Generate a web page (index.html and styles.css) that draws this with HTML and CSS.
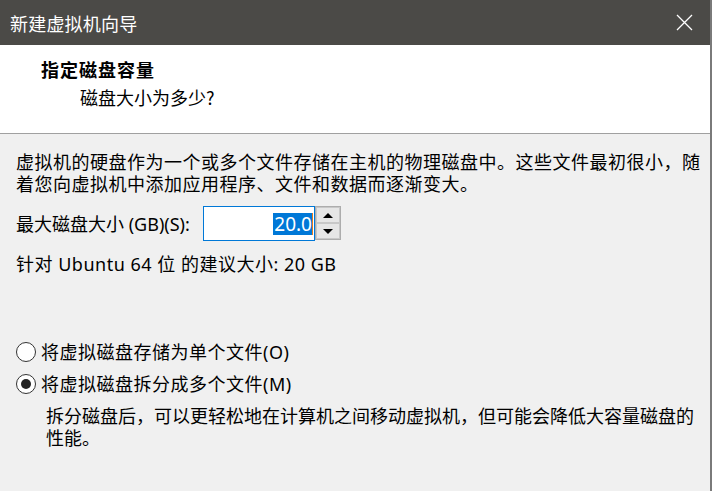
FILE: index.html
```html
<!DOCTYPE html>
<html lang="zh-CN">
<head>
<meta charset="utf-8">
<title>新建虚拟机向导</title>
<link rel="stylesheet" href="styles.css">
</head>
<body>
<div class="window">
  <div class="titlebar">
    <span class="title">新建虚拟机向导</span>
    <svg class="close" width="17" height="17" viewBox="0 0 17 17"><path d="M1 1 L16 16 M16 1 L1 16" stroke="#ffffff" stroke-width="1.3" fill="none"/></svg>
  </div>
  <div class="header">
    <div class="h-title">指定磁盘容量</div>
    <div class="h-sub">磁盘大小为多少?</div>
  </div>
  <div class="content">
    <p class="para">虚拟机的硬盘作为一个或多个文件存储在主机的物理磁盘中。这些文件最初很小，随着您向虚拟机中添加应用程序、文件和数据而逐渐变大。</p>
    <div class="size-row">
      <span class="label">最大磁盘大小 (GB)(S):</span>
      <div class="spin">
        <div class="spin-input"><span class="sel">20.0</span><span class="caret"></span></div>
        <div class="spin-btns">
          <div class="spin-btn"><span class="tri up"></span></div>
          <div class="spin-btn"><span class="tri down"></span></div>
        </div>
      </div>
    </div>
    <p class="recommend">针对 Ubuntu 64 位 的建议大小: 20 GB</p>
    <div class="radios">
      <div class="radio-row"><span class="radio"></span><span>将虚拟磁盘存储为单个文件(O)</span></div>
      <div class="radio-row"><span class="radio checked"></span><span>将虚拟磁盘拆分成多个文件(M)</span></div>
      <p class="desc">拆分磁盘后，可以更轻松地在计算机之间移动虚拟机，但可能会降低大容量磁盘的性能。</p>
    </div>
  </div>
</div>
</body>
</html>
```
FILE: styles.css
```css
html, body {
  margin: 0;
  padding: 0;
  background: #ffffff;
}
body {
  width: 713px;
  height: 491px;
  overflow: hidden;
  font-family: "Noto Sans", "Noto Sans CJK SC", sans-serif;
  color: #000;
}
.window {
  width: 710px;
  height: 491px;
  border-right: 2px solid #7a7a7a;
  background: #f0f0f0;
  display: flex;
  flex-direction: column;
}
.titlebar {
  height: 45px;
  background: #4b4a47;
  color: #fff;
  display: flex;
  align-items: center;
  justify-content: space-between;
  padding: 0 17px 0 10px;
  flex: none;
}
.title {
  font-family: "Noto Sans CJK SC", sans-serif;
  font-size: 18px;
  letter-spacing: 0.2px;
}
.close {
  display: block;
}
.header {
  height: 89px;
  background: #fff;
  border-bottom: 1px solid #a0a0a0;
  box-sizing: border-box;
  padding: 13px 0 0 41px;
  flex: none;
  font-family: "Noto Sans CJK SC", sans-serif;
}
.h-title {
  font-size: 18px;
  font-weight: 700;
  line-height: 22px;
  letter-spacing: 1px;
}
.h-sub {
  font-size: 18px;
  line-height: 22px;
  margin: 6px 0 0 39px;
}
.content {
  padding: 17px 0 0 16px;
  font-size: 18px;
  line-height: 22px;
  letter-spacing: 0.5px;
}
.para {
  margin: 0;
  width: 700px;
}
.size-row {
  display: flex;
  align-items: center;
  margin-top: 11px;
  height: 35px;
}
.label {
  width: 187px;
  letter-spacing: 0;
}
.spin {
  display: flex;
  height: 35px;
}
.spin-input {
  width: 112px;
  height: 35px;
  box-sizing: border-box;
  border: 1px solid #0078d7;
  background: #fff;
  display: flex;
  align-items: center;
  justify-content: flex-end;
  padding-right: 1px;
  letter-spacing: 0;
}
.sel {
  background: #0078d7;
  color: #fff;
  font-size: 19px;
  line-height: 22px;
  padding: 0 0 0 1px;
}
.caret {
  width: 1px;
  height: 22px;
  background: #e07a1f;
}
.spin-btns {
  width: 26px;
  height: 34px;
  border: 1px solid #adadad;
  box-sizing: border-box;
  display: flex;
  flex-direction: column;
  background: #f0f0f0;
}
.spin-btn {
  flex: 1;
  border: 1px solid #c8c8c8;
  background: #e6e6e6;
  display: flex;
  align-items: center;
  justify-content: center;
}
.tri {
  width: 0;
  height: 0;
  border-left: 5px solid transparent;
  border-right: 5px solid transparent;
}
.tri.up { border-bottom: 5px solid #000; }
.tri.down { border-top: 5px solid #000; }
.recommend {
  margin: 12px 0 0;
}
.radios {
  margin-top: 66px;
}
.radio-row {
  display: flex;
  align-items: center;
  height: 22px;
  margin-bottom: 10px;
}
.radio {
  width: 20px;
  height: 20px;
  box-sizing: border-box;
  border: 1.5px solid #333;
  border-radius: 50%;
  background: #fff;
  margin-right: 5px;
  display: flex;
  align-items: center;
  justify-content: center;
}
.radio.checked::after {
  content: "";
  width: 10px;
  height: 10px;
  border-radius: 50%;
  background: #222;
}
.desc {
  margin: 2px 0 0 30px;
  width: 660px;
  letter-spacing: 0;
}
```
